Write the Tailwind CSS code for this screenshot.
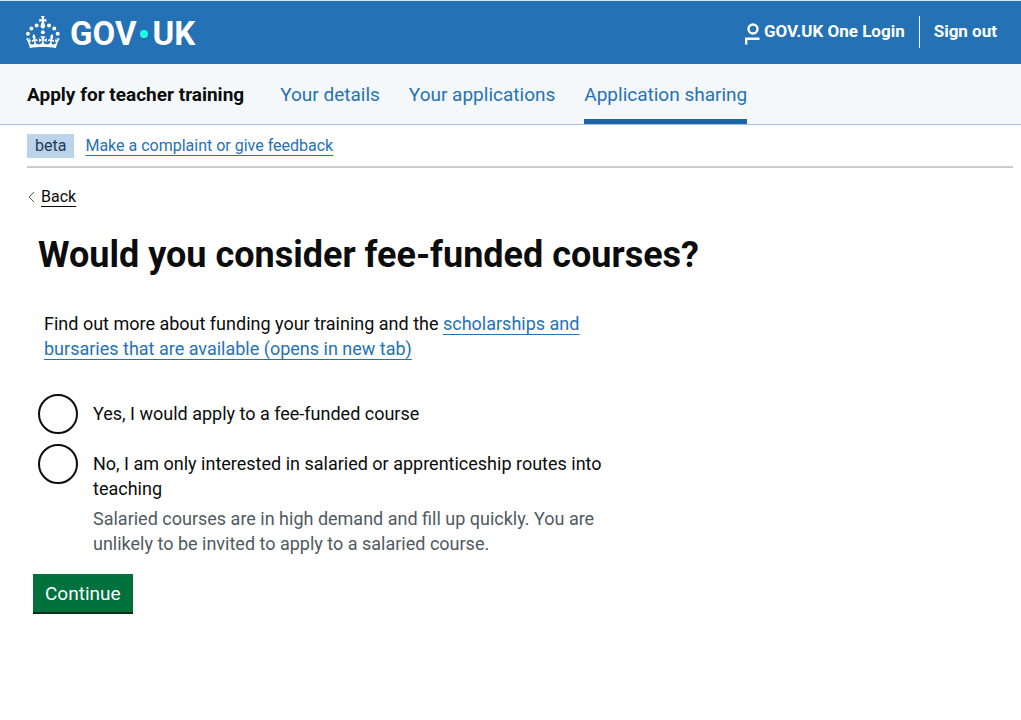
<!DOCTYPE html>
<html lang="en">
<head>
<meta charset="utf-8">
<meta name="viewport" content="width=device-width, initial-scale=1">
<title>Would you consider fee-funded courses?</title>
<script src="https://cdn.jsdelivr.net/npm/@tailwindcss/browser@4"></script>
</head>
<body class="bg-white font-['Roboto',sans-serif] text-[18px] leading-[25px] text-[#0b0c0c]">
<header class="flex h-16 items-center justify-between border-t border-[#d5e4e4] bg-[#2472b5] pr-6 pl-[26px] text-white">
  <a href="#" aria-label="GOV.UK" class="flex items-center gap-[10px] pb-[2px]">
    <svg class="h-8 w-[34px]" viewBox="0 0 64 60" fill="currentColor" aria-hidden="true">
      <circle cx="20" cy="17.6" r="3.7"/><circle cx="10.2" cy="23.5" r="3.7"/><circle cx="3.7" cy="33.2" r="3.7"/><circle cx="31.7" cy="30.6" r="3.7"/><circle cx="43.3" cy="17.6" r="3.7"/><circle cx="53.2" cy="23.5" r="3.7"/><circle cx="59.7" cy="33.2" r="3.7"/>
      <path d="M33.1,9.8c.2-.1.3-.3.5-.5l4.6,2.4v-6.8l-4.6,1.5c-.1-.2-.3-.3-.5-.5l1.9-5.9h-6.7l1.9,5.9c-.2.1-.3.3-.5.5l-4.6-1.5v6.8l4.6-2.4c.1.2.3.3.5.5l-2.6,8c-.9,2.8,1.2,5.7,4.1,5.7h0c3,0,5.1-2.9,4.1-5.7l-2.6-8ZM37,37.9s-3.4,3.8-4.1,6.1c2.2,0,4.2-.5,6.4-2.8l-.7,8.5c-2-2.8-4.4-4.1-5.7-3.8.1,3.1.5,6.7,5.8,7.2,3.7.3,6.7-1.5,7-3.8.4-2.6-2-4.3-3.7-1.6-1.4-4.5,2.4-6.1,4.9-3.2-1.9-4.5-1.8-7.7,2.4-10.9,3,4,2.6,7.3-1.2,11.1,2.4-1.3,6.2,0,4,4.6-1.2-2.8-3.7-2.2-4.2.2-.3,1.7.7,3.7,3,4.2,1.9.3,4.7-.9,7-5.9-1.3,0-2.4.7-3.9,1.7l2.4-8c.6,2.3,1.4,3.7,2.2,4.5.6-1.6.5-2.8,0-5.3l5,1.8c-2.6,3.6-5.2,8.7-7.3,17.5-7.4-1.1-15.7-1.7-24.5-1.7h0c-8.8,0-17.1.6-24.5,1.7-2.1-8.9-4.7-13.9-7.3-17.5l5-1.8c-.5,2.5-.6,3.7,0,5.3.8-.8,1.6-2.3,2.2-4.5l2.4,8c-1.5-1-2.6-1.7-3.9-1.7,2.3,5,5.2,6.2,7,5.9,2.3-.4,3.3-2.4,3-4.2-.5-2.4-3-3.1-4.2-.2-2.2-4.6,1.6-6,4-4.6-3.7-3.7-4.2-7.1-1.2-11.1,4.2,3.2,4.3,6.4,2.4,10.9,2.5-2.8,6.3-1.3,4.9,3.2-1.8-2.7-4.1-1-3.7,1.6.3,2.3,3.3,4.1,7,3.8,5.4-.5,5.7-4.2,5.8-7.2-1.3-.2-3.7,1-5.7,3.8l-.7-8.5c2.2,2.3,4.2,2.7,6.4,2.8-.7-2.3-4.1-6.1-4.1-6.1h10.6,0Z"/>
    </svg>
    <span class="flex items-center gap-1 pt-1 text-[33px] leading-8 font-bold"><span>GOV</span><span class="size-2 rounded-full bg-[#1cffe5]"></span><span>UK</span></span>
  </a>
  <nav aria-label="Account" class="flex items-center pb-[2px] text-[17px] font-bold">
    <a href="#" class="flex items-center gap-1 border-r border-white py-[3px] pr-[14px]">
      <svg class="mt-1 h-[22px] w-[15px]" viewBox="0 0 15 22" fill="none" stroke="currentColor" stroke-width="2.4" aria-hidden="true">
        <circle cx="8" cy="6" r="4.5"/><path d="M14.5 15.8H1.2V21.4"/>
      </svg>
      <span>GOV.UK One Login</span>
    </a>
    <a href="#" class="pl-[14px]">Sign out</a>
  </nav>
</header>
<nav aria-label="Service" class="flex h-[61px] items-stretch gap-9 border-b border-[#9cc3e6] bg-[#f4f8fb] px-[27px] text-[19px] text-[#2472b5]">
  <a href="#" class="flex items-center font-bold text-[#0b0c0c]">Apply for teacher training</a>
  <div class="flex gap-[29px]">
    <a href="#" class="flex items-center">Your details</a>
    <a href="#" class="flex items-center">Your applications</a>
    <a href="#" aria-current="page" class="flex items-center border-b-5 border-[#1d65a6] pt-[5px]">Application sharing</a>
  </div>
</nav>
<div class="mr-2 ml-[27px] flex items-center gap-[11px] border-b-2 border-[#cbcbcb] pt-[9px] pb-2 text-base">
  <strong class="bg-[#bbd4ea] px-2 font-normal text-[#1c3c5a]">beta</strong>
  <a href="#" class="text-[#2472b5] underline decoration-1 underline-offset-4">Make a complaint or give feedback</a>
</div>
<div class="flex px-[27px] pt-[17px] text-base">
  <a href="#" class="flex items-center gap-[5px]">
    <svg class="h-3 w-[9px]" viewBox="0 0 9 12" fill="none" stroke="#505a5f" aria-hidden="true"><path d="M7 1L2 6L7 11"/></svg>
    <span class="underline decoration-1 underline-offset-4">Back</span>
  </a>
</div>
<main class="max-w-[700px] pl-[38px]">
  <h1 class="pt-[26px] text-[36px] leading-10 font-bold">Would you consider fee-funded courses?</h1>
  <p class="max-w-[580px] pt-9 pl-[6px]">Find out more about funding your training and the <a href="#" class="text-[#2472b5] underline decoration-1 underline-offset-4">scholarships and bursaries that are available (opens in new tab)</a></p>
  <form class="flex flex-col gap-[10px] pt-[33px]">
    <div class="flex gap-[15px]">
      <input id="yes" type="radio" name="fee" class="size-10 shrink-0 appearance-none rounded-full border-2 border-[#0b0c0c] checked:shadow-[inset_0_0_0_8px_white] checked:bg-[#0b0c0c]">
      <label for="yes" class="pt-[7px]">Yes, I would apply to a fee-funded course</label>
    </div>
    <div class="flex gap-[15px]">
      <input id="no" type="radio" name="fee" aria-describedby="no-hint" class="size-10 shrink-0 appearance-none rounded-full border-2 border-[#0b0c0c] checked:shadow-[inset_0_0_0_8px_white] checked:bg-[#0b0c0c]">
      <div class="max-w-[530px] pt-[7px]">
        <label for="no">No, I am only interested in salaried or apprenticeship routes into teaching</label>
        <p id="no-hint" class="pt-[5px] text-[#505a5f]">Salaried courses are in high demand and fill up quickly. You are unlikely to be invited to apply to a salaried course.</p>
      </div>
    </div>
    <button type="submit" class="mt-2 -ml-[5px] self-start border-b-2 border-[#002d18] bg-[#00703c] px-3 pt-[7px] pb-[6px] text-[19px] text-white">Continue</button>
  </form>
</main>
</body>
</html>
